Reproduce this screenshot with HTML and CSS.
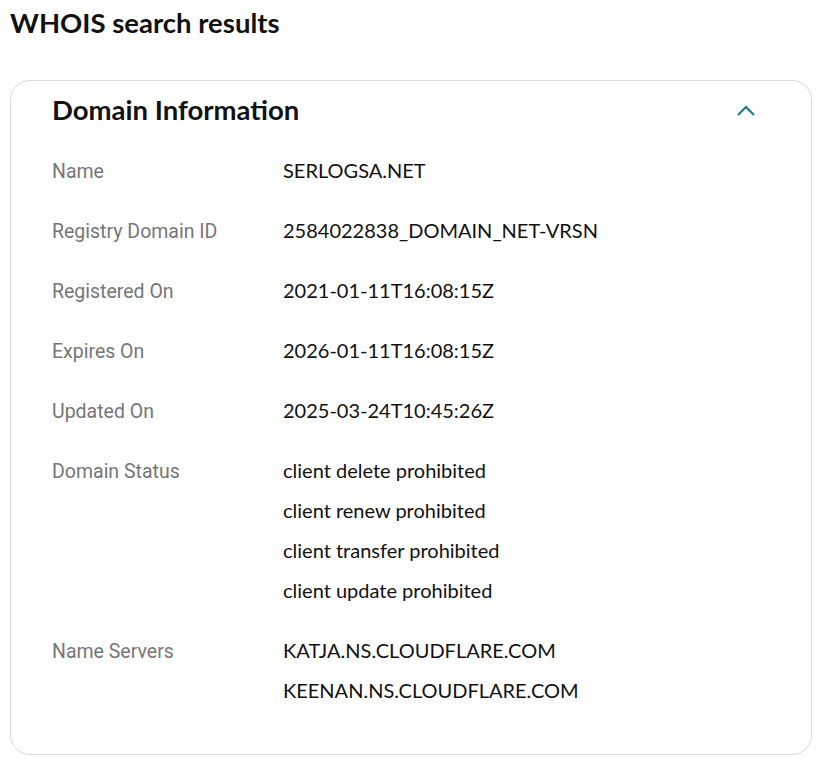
FILE: index.html
```html
<!DOCTYPE html>
<html>
<head>
<meta charset="utf-8">
<link rel="stylesheet" href="styles.css">
</head>
<body>
<h1 class="page-title">WHOIS search results</h1>
<section class="card">
  <div class="card-head">
    <h2 class="card-title">Domain Information</h2>
    <svg class="chevron" width="20" height="14" viewBox="0 0 20 14"><path d="M2 12 L10 4 L18 12" fill="none" stroke="#1b7d83" stroke-width="2.2"/></svg>
  </div>
  <dl class="rows">
    <div class="row"><dt>Name</dt><dd><span>SERLOGSA.NET</span></dd></div>
    <div class="row"><dt>Registry Domain ID</dt><dd><span>2584022838_DOMAIN_NET-VRSN</span></dd></div>
    <div class="row"><dt>Registered On</dt><dd><span>2021-01-11T16:08:15Z</span></dd></div>
    <div class="row"><dt>Expires On</dt><dd><span>2026-01-11T16:08:15Z</span></dd></div>
    <div class="row"><dt>Updated On</dt><dd><span>2025-03-24T10:45:26Z</span></dd></div>
    <div class="row"><dt>Domain Status</dt><dd><span>client delete prohibited</span><span>client renew prohibited</span><span>client transfer prohibited</span><span>client update prohibited</span></dd></div>
    <div class="row"><dt>Name Servers</dt><dd><span>KATJA.NS.CLOUDFLARE.COM</span><span>KEENAN.NS.CLOUDFLARE.COM</span></dd></div>
  </dl>
</section>
</body>
</html>
```
FILE: styles.css
```css
html, body { margin: 0; padding: 0; background: #fff; }
body { padding: 0 18px 0 10px; font-family: Lato, "Noto Sans", sans-serif; color: #111; }
.page-title { margin: 0; padding-top: 5px; height: 75px; font-size: 27.5px; font-weight: 700; line-height: 36px; }
.card { border: 1px solid #d6d9de; border-radius: 20px; padding: 9px 41px 44px; }
.card-head { display: flex; justify-content: space-between; align-items: center; height: 40px; padding-right: 14px; }
.card-title { margin: 0; font-size: 27.5px; font-weight: 700; line-height: 40px; }
.chevron { display: block; }
.rows { margin: 20px 0 0; }
.row { display: flex; align-items: flex-start; padding-bottom: 20px; }
.row:last-child { padding-bottom: 0; }
dt { width: 231px; flex: none; font-family: Roboto, "Liberation Sans", sans-serif; font-size: 19.5px; color: #767676; line-height: 36px; padding-top: 4px; }
dd { margin: 0; display: flex; flex-direction: column; font-size: 20px; line-height: 40px; color: #111; }
```
